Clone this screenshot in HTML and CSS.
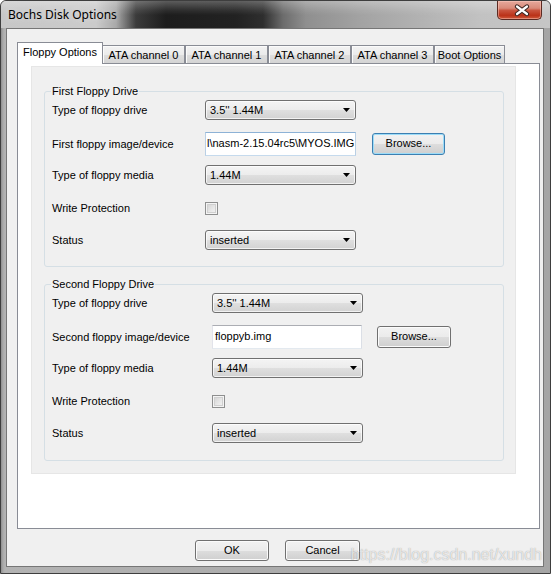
FILE: index.html
```html
<!DOCTYPE html>
<html lang="en">
<head>
<meta charset="utf-8">
<title>Bochs Disk Options</title>
<link rel="stylesheet" href="styles.css">
</head>
<body>
<div class="window">
  <div class="titlebar">
    <span class="title">Bochs Disk Options</span>
    <div class="close">
      <svg width="44" height="18" viewBox="0 0 44 18">
        <path d="M19 5.5 L29 13 M29 5.5 L19 13" stroke="#3b2622" stroke-width="4.4" stroke-linecap="round" fill="none"/>
        <path d="M19 5.5 L29 13 M29 5.5 L19 13" stroke="#ffffff" stroke-width="2.2" stroke-linecap="round" fill="none"/>
      </svg>
    </div>
  </div>
  <div class="client">
    <div class="tabs">
      <div class="tab active">Floppy Options</div>
      <div class="tab">ATA channel 0</div>
      <div class="tab">ATA channel 1</div>
      <div class="tab">ATA channel 2</div>
      <div class="tab">ATA channel 3</div>
      <div class="tab boot">Boot Options</div>
    </div>
    <div class="panel">
      <div class="page">
        <fieldset class="group g1">
          <legend>First Floppy Drive</legend>
          <div class="row r-first">
            <span class="lbl">Type of floppy drive</span>
            <div class="combo"><span>3.5'' 1.44M</span><svg width="7" height="4" viewBox="0 0 7 4"><path d="M0 0H7L3.5 4Z"/></svg></div>
          </div>
          <div class="row r-text">
            <span class="lbl">First floppy image/device</span>
            <div class="field focus">l\nasm-2.15.04rc5\MYOS.IMG</div>
            <div class="btn browse default">Browse...</div>
          </div>
          <div class="row r-media">
            <span class="lbl">Type of floppy media</span>
            <div class="combo"><span>1.44M</span><svg width="7" height="4" viewBox="0 0 7 4"><path d="M0 0H7L3.5 4Z"/></svg></div>
          </div>
          <div class="row r-check">
            <span class="lbl">Write Protection</span>
            <div class="check"></div>
          </div>
          <div class="row r-status">
            <span class="lbl">Status</span>
            <div class="combo"><span>inserted</span><svg width="7" height="4" viewBox="0 0 7 4"><path d="M0 0H7L3.5 4Z"/></svg></div>
          </div>
        </fieldset>
        <fieldset class="group g2">
          <legend>Second Floppy Drive</legend>
          <div class="row r-first">
            <span class="lbl">Type of floppy drive</span>
            <div class="combo"><span>3.5'' 1.44M</span><svg width="7" height="4" viewBox="0 0 7 4"><path d="M0 0H7L3.5 4Z"/></svg></div>
          </div>
          <div class="row r-text">
            <span class="lbl">Second floppy image/device</span>
            <div class="field">floppyb.img</div>
            <div class="btn browse">Browse...</div>
          </div>
          <div class="row r-media">
            <span class="lbl">Type of floppy media</span>
            <div class="combo"><span>1.44M</span><svg width="7" height="4" viewBox="0 0 7 4"><path d="M0 0H7L3.5 4Z"/></svg></div>
          </div>
          <div class="row r-check">
            <span class="lbl">Write Protection</span>
            <div class="check"></div>
          </div>
          <div class="row r-status">
            <span class="lbl">Status</span>
            <div class="combo"><span>inserted</span><svg width="7" height="4" viewBox="0 0 7 4"><path d="M0 0H7L3.5 4Z"/></svg></div>
          </div>
        </fieldset>
      </div>
    </div>
    <div class="buttons">
      <div class="btn ok">OK</div>
      <div class="btn cancel">Cancel</div>
    </div>
  </div>
  <div class="watermark">https://blog.csdn.net/xundh</div>
</div>
</body>
</html>
```

FILE: styles.css
```css
* { box-sizing: border-box; }
html, body { margin: 0; padding: 0; }
body {
  width: 551px;
  height: 574px;
  overflow: hidden;
  background: #ffffff;
  font-family: "Liberation Sans", Arial, sans-serif;
  font-size: 11px;
  color: #000;
}
.window {
  position: relative;
  width: 551px;
  height: 574px;
  border: 1px solid #3e3e3e;
  border-radius: 6px 6px 0 0;
  padding: 0 6px 6px 5px;
  display: flex;
  flex-direction: column;
  background: linear-gradient(to right, #8e8e8e 0, #a9a9a9 2px, #b3b3b3 4px, #a5a5a5 100%);
}
.titlebar {
  height: 27px;
  margin: 0 -6px 0 -5px;
  border-radius: 5px 5px 0 0;
  display: flex;
  justify-content: space-between;
  align-items: flex-start;
  background:
    linear-gradient(to bottom, rgba(255,255,255,0.28) 0, rgba(255,255,255,0.08) 9px, rgba(255,255,255,0) 14px),
    linear-gradient(to right, #c7c7c7 0, #cbcbcb 95px, #a9a9a9 115px, #3b3b3b 135px, #1d1d1d 165px, #222 235px, #2e2e2e 262px, #6c6c6c 282px, #8f8f8f 305px, #a3a3a3 360px, #b5b5b5 430px, #c2c2c2 480px, #c6c6c6 100%);
}
.title {
  margin: 6px 0 0 7px;
  font-family: "Noto Sans", "Open Sans", sans-serif;
  font-size: 12px;
  line-height: 16px;
  color: #000;
  text-shadow: 0 0 6px rgba(255,255,255,0.5);
}
.close {
  width: 45px;
  height: 19px;
  margin-right: 8px;
  border: 1px solid #5b2a22;
  border-top: 0;
  border-radius: 0 0 5px 5px;
  background: linear-gradient(to bottom, #e6a99c 0, #d98a79 40%, #c9553f 52%, #bb3219 80%, #cf5a3c 100%);
  box-shadow: inset 0 0 0 1px rgba(255, 210, 200, 0.45);
}
.close svg { display: block; }

.client {
  flex: 1;
  border: 1px solid #767676;
  background: #f0f0f0;
  display: flex;
  flex-direction: column;
  padding: 13px 0 0 10px;
}

/* tabs */
.tabs {
  display: flex;
  align-items: flex-end;
  height: 21px;
}
.tab {
  width: 83px;
  height: 18px;
  border: 1px solid #898c95;
  border-bottom: 0;
  padding-top: 3px;
  line-height: 13px;
  text-align: center;
  white-space: nowrap;
  background: linear-gradient(to bottom, #f3f3f3 0, #ebebeb 50%, #dedede 51%, #d4d4d4 100%);
  box-shadow: inset 1px 1px 0 #fbfbfb;
}
.tab.boot { width: 71px; }
.tab.active {
  position: relative;
  z-index: 1;
  width: 86px;
  height: 22px;
  margin-right: -1px;
  margin-bottom: -1px;
  background: #ffffff;
  box-shadow: none;
}
.panel {
  width: 523px;
  height: 466px;
  border: 1px solid #898c95;
  background: #ffffff;
  padding: 2px 0 0 13px;
}
.page {
  width: 485px;
  height: 408px;
  border: 1px solid #e6e6e6;
  background: #f0f0f0;
  padding: 18px 0 0 12px;
}

/* group boxes */
.group {
  margin: 0;
  width: 460px;
  min-width: 0;
  padding: 2px 0 16px 7px;
  border: 1px solid #d5dfe5;
  border-radius: 3px;
}
.group legend {
  padding: 0 1px;
  margin-left: -1px;
  line-height: 13px;
}
.g2 {
  margin-top: 11px;
  padding-bottom: 17px;
}
.row {
  display: flex;
  align-items: center;
}
.lbl {
  width: 153px;
  flex: none;
  line-height: 13px;
  white-space: nowrap;
}
.g2 .lbl { width: 160px; }
.r-first { height: 20px; }
.r-text { height: 24px; margin-top: 12px; }
.r-media { height: 20px; margin-top: 9px; }
.r-check { height: 13px; margin-top: 17px; }
.r-status { height: 20px; margin-top: 15px; }

.combo {
  width: 151px;
  height: 20px;
  border: 1px solid #707070;
  border-radius: 3px;
  background: linear-gradient(to bottom, #f4f4f4 0, #ececec 50%, #dfdfdf 51%, #d2d2d2 100%);
  box-shadow: inset 0 0 0 1px rgba(255,255,255,0.7);
  display: flex;
  align-items: center;
  justify-content: space-between;
  padding: 0 5px 0 4px;
  line-height: 13px;
}
.combo svg { display: block; flex: none; }
.field {
  width: 151px;
  height: 24px;
  border: 1px solid;
  border-color: #abadb3 #dbdfe6 #e3e9ef #e2e3ea;
  background: #ffffff;
  padding: 0 2px 0 2px;
  line-height: 21px;
  white-space: nowrap;
  overflow: hidden;
}
.field.focus {
  border-color: #8db2d6 #b9cfe4 #c5daed #b9cfe4;
  padding-left: 1px;
}
.g2 .field { width: 150px; }
.check {
  width: 13px;
  height: 13px;
  border: 1px solid #8e8f8f;
  background: linear-gradient(135deg, #cfcfcf 0, #e9e9e9 60%, #f6f6f6 100%);
  box-shadow: inset 0 0 0 1px #f4f4f4, inset 0 0 0 2px #d0d0d0;
}

.btn {
  height: 21px;
  border: 1px solid #707070;
  border-radius: 3px;
  background: linear-gradient(to bottom, #f2f2f2 0, #ebebeb 50%, #dddddd 51%, #cfcfcf 100%);
  box-shadow: inset 0 0 0 1px #fbfbfb;
  text-align: center;
  line-height: 18px;
  white-space: nowrap;
}
.browse {
  width: 73px;
  height: 22px;
  margin-left: 16px;
  line-height: 19px;
}
.g2 .browse { width: 74px; margin-left: 15px; }
.btn.default {
  border-color: #3c7fb1;
  box-shadow: inset 0 0 0 1px #9cdcf8;
}
.buttons {
  display: flex;
  gap: 16px;
  margin-top: 11px;
  padding-left: 178px;
}
.ok { width: 74px; }
.cancel { width: 75px; }

.watermark {
  position: absolute;
  right: 8px;
  top: 546px;
  font-family: "Liberation Sans", Arial, sans-serif;
  font-size: 16px;
  line-height: 16px;
  color: rgba(255,255,255,0.72);
  text-shadow: 0 0 1px rgba(90,90,90,0.6);
  white-space: nowrap;
}
```
